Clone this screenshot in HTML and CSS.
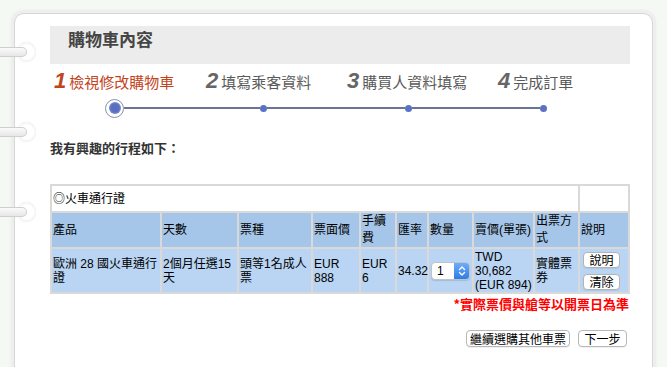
FILE: index.html
```html
<!DOCTYPE html>
<html lang="zh-Hant">

    <head>
        <meta charset="UTF-8">
        <meta name="viewport" content="width=device-width, initial-scale=1.0">
        <title>購物車內容</title>
        <link rel="stylesheet" href="styles.css">
    </head>

    <body>
        <!-- binder rings on the left edge -->
        <div class="rings">
            <span class="ring ring-1"></span>
            <span class="ring ring-2"></span>
            <span class="ring ring-3"></span>
        </div>

        <div class="card">
            <div class="card-title">購物車內容</div>

            <div class="steps">
                <div class="step step-1 current"><b>1</b>檢視修改購物車</div>
                <div class="step step-2"><b>2</b>填寫乘客資料</div>
                <div class="step step-3"><b>3</b>購買人資料填寫</div>
                <div class="step step-4"><b>4</b>完成訂單</div>
            </div>
            <div class="track">
                <span class="dot big"><i></i></span>
                <span class="seg seg-1"></span>
                <span class="dot"></span>
                <span class="seg seg-2"></span>
                <span class="dot"></span>
                <span class="seg seg-3"></span>
                <span class="dot"></span>
            </div>

            <p class="intro">我有興趣的行程如下：</p>

            <table class="cart">
                <colgroup>
                    <col class="c-product">
                    <col class="c-days">
                    <col class="c-type">
                    <col class="c-face">
                    <col class="c-fee">
                    <col class="c-rate">
                    <col class="c-qty">
                    <col class="c-price">
                    <col class="c-issue">
                    <col class="c-info">
                </colgroup>
                <tr class="title-row">
                    <td colspan="9">◎火車通行證</td>
                    <td></td>
                </tr>
                <tr class="head-row">
                    <th>產品</th>
                    <th>天數</th>
                    <th>票種</th>
                    <th>票面價</th>
                    <th>手續費</th>
                    <th>匯率</th>
                    <th>數量</th>
                    <th>賣價(單張)</th>
                    <th>出票方式</th>
                    <th>說明</th>
                </tr>
                <tr class="item-row">
                    <td>歐洲 28 國火車通行證</td>
                    <td>2個月任選15天</td>
                    <td>頭等1名成人票</td>
                    <td>EUR 888</td>
                    <td>EUR 6</td>
                    <td>34.32</td>
                    <td>
                        <span class="qty">
                            <select>
                                <option>1</option>
                                <option>2</option>
                                <option>3</option>
                            </select>
                            <span class="qty-arrows">
                                <svg width="8" height="12" viewBox="0 0 8 12">
                                    <path d="M1.5 4.5 L4 2 L6.5 4.5 M1.5 7.5 L4 10 L6.5 7.5" fill="none" stroke="#fff" stroke-width="1.4" stroke-linecap="round" stroke-linejoin="round"/>
                                </svg>
                            </span>
                        </span>
                    </td>
                    <td>TWD 30,682 (EUR 894)</td>
                    <td>實體票券</td>
                    <td>
                        <button class="small-btn">說明</button>
                        <button class="small-btn">清除</button>
                    </td>
                </tr>
            </table>

            <p class="note">*實際票價與艙等以開票日為準</p>

            <div class="actions">
                <button class="btn btn-more">繼續選購其他車票</button>
                <button class="btn btn-next">下一步</button>
            </div>
        </div>
    </body>

</html>
```

FILE: styles.css
```css
:root {
    --page-bg: #f4faf3;
    --bar-grey: #ececec;
    --step-red: #c3441c;
    --step-grey: #5a5a5a;
    --track: #6b7592;
    --dot: #5b72c4;
    --head-blue: #a5c6e9;
    --row-blue: #b9d5f3;
    --grid: #d9d9d9;
}

*,
*::before,
*::after {
    box-sizing: border-box;
}

html,
body {
    overflow: hidden;
}

body {
    margin: 0;
    background: var(--page-bg);
    font-family: "Liberation Sans", "Noto Sans CJK TC", sans-serif;
    color: #000;
}

/* rings */
.rings {
    position: absolute;
    left: 0;
    top: 0;
    z-index: 2;
}

.ring {
    position: absolute;
    left: 0;
    width: 37px;
    height: 20px;
}

.ring-1 { top: 42px; }
.ring-2 { top: 122px; }
.ring-3 { top: 202px; }

.ring::before {
    content: "";
    position: absolute;
    left: 17px;
    top: 0;
    width: 19px;
    height: 20px;
    border-radius: 50%;
    background: radial-gradient(circle, #ffffff 50%, #ececec 80%, #dcdcdc 100%);
    box-shadow: 0 0 1px rgba(0, 0, 0, 0.15);
}

.ring::after {
    content: "";
    position: absolute;
    left: 0;
    top: 5px;
    width: 27px;
    height: 10px;
    border: 1px solid #cfcfcf;
    border-left: 0;
    border-radius: 0 5px 5px 0;
    background: linear-gradient(#fbfbfb, #e7e7e7);
}

/* card */
.card {
    margin: 13px 0 0 14px;
    width: 639px;
    min-height: 380px;
    background: #fff;
    border: 1px solid #d6d6d6;
    border-radius: 10px;
    box-shadow: 0 0 0 3px #eeeeee, 0 0 3px 4px #f0f3f0;
    padding: 12px 22px 0 35px;
}

.card-title {
    height: 38px;
    background: var(--bar-grey);
    padding: 2px 0 0 18px;
    font: bold 17px/22px "Noto Sans CJK TC", sans-serif;
    color: #454545;
}

/* steps */
.steps {
    display: flex;
    align-items: baseline;
    height: 24px;
    margin-top: 5px;
    padding-left: 4px;
}

.step {
    font: 15px/24px "Noto Sans CJK TC", sans-serif;
    color: var(--step-grey);
    white-space: nowrap;
}

.step b {
    font: italic bold 22px/24px "Liberation Sans", sans-serif;
    color: #666;
    margin-right: 3px;
}

.step.current,
.step.current b {
    color: var(--step-red);
}

.step-1 { width: 152px; }
.step-2 { width: 141px; }
.step-3 { width: 151px; }

.track {
    display: flex;
    align-items: center;
    height: 20px;
    margin: 5px 0 0 55px;
}

.dot {
    flex: none;
    width: 7px;
    height: 7px;
    border-radius: 50%;
    background: var(--dot);
}

.dot.big {
    width: 19px;
    height: 19px;
    border: 1px solid #8791ae;
    background: #fff;
    display: flex;
    align-items: center;
    justify-content: center;
}

.dot.big i {
    width: 12px;
    height: 12px;
    border-radius: 50%;
    background: radial-gradient(circle, #5a6fc2 45%, #a7b1d8 100%);
}

.seg {
    flex: none;
    height: 2px;
    background: var(--track);
}

.seg-1 { width: 136px; }
.seg-2 { width: 138px; }
.seg-3 { width: 128px; }

.intro {
    margin: 21px 0 0;
    font: bold 13px/18px "Noto Sans CJK TC", sans-serif;
    color: #333;
}

/* table */
.cart {
    width: 580px;
    margin-top: 27px;
    table-layout: fixed;
    border-spacing: 2px;
    background: var(--grid);
    font-size: 12px;
    line-height: 14px;
}

.c-product { width: 108px; }
.c-days { width: 75px; }
.c-type { width: 72px; }
.c-face { width: 46px; }
.c-fee { width: 34px; }
.c-rate { width: 30px; }
.c-qty { width: 43px; }
.c-price { width: 59px; }
.c-issue { width: 43px; }
.c-info { width: 48px; }

.cart th,
.cart td {
    padding: 0 1px;
    text-align: left;
    vertical-align: middle;
    font-weight: normal;
}

.title-row td {
    height: 25px;
    background: #fff;
}

.head-row th {
    height: 34px;
    line-height: 17px;
    background: var(--head-blue);
}

.item-row td {
    height: 43px;
    background: var(--row-blue);
}

.qty {
    display: inline-flex;
    vertical-align: middle;
    width: 39px;
    height: 18px;
    margin-left: 1px;
    border: 1px solid #c2c2c2;
    border-radius: 4px;
    background: #fff;
    box-shadow: 0 1px 1px rgba(0, 0, 0, 0.12);
    overflow: hidden;
}

.qty select {
    appearance: none;
    -webkit-appearance: none;
    width: 23px;
    height: 16px;
    border: 0;
    padding: 0 0 0 5px;
    background: transparent;
    font: 12px/16px "Liberation Sans", sans-serif;
    color: #000;
}

.qty-arrows {
    width: 15px;
    display: flex;
    align-items: center;
    justify-content: center;
    background: linear-gradient(#6eacf7, #2e7de6);
}

.small-btn {
    display: block;
    width: 37px;
    height: 16px;
    margin: 0 0 0 2px;
    padding: 0;
    border: 1px solid #b3b3b3;
    border-radius: 4px;
    background: #fff;
    box-shadow: 0 1px 0 rgba(0, 0, 0, 0.06);
    font: 12px/14px "Noto Sans CJK TC", sans-serif;
    color: #000;
}

.small-btn + .small-btn {
    margin-top: 6px;
}

.note {
    margin: 2px 0 0;
    padding-right: 1px;
    text-align: right;
    color: #f00;
    font: bold 13px/16px "Noto Sans CJK TC", sans-serif;
}

.actions {
    display: flex;
    justify-content: flex-end;
    gap: 8px;
    margin-top: 18px;
    padding-right: 3px;
}

.btn {
    height: 17px;
    padding: 0;
    border: 1px solid #b8b8b8;
    border-radius: 4px;
    background: #fff;
    box-shadow: 0 1px 0 rgba(0, 0, 0, 0.06);
    font: 12px/15px "Noto Sans CJK TC", sans-serif;
    color: #000;
}

.btn-more { width: 104px; }
.btn-next { width: 49px; }
```
